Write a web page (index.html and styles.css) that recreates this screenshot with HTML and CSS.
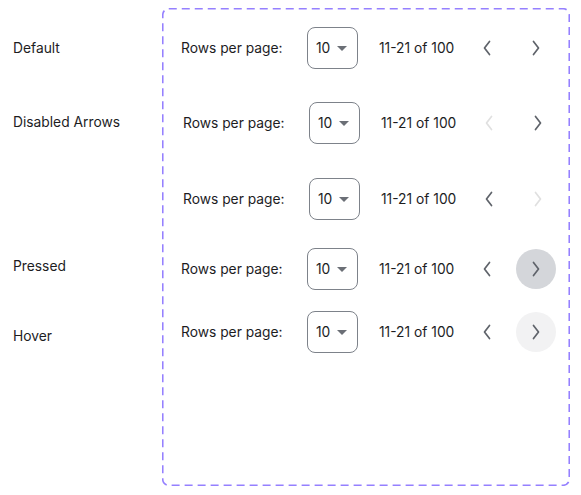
FILE: index.html
```html
<!DOCTYPE html>
<html>
<head>
<meta charset="utf-8">
<link rel="stylesheet" href="styles.css">
</head>
<body>
<div class="page">
  <div class="labels">
    <div class="label l1">Default</div>
    <div class="label l2">Disabled Arrows</div>
    <div class="label l3">Pressed</div>
    <div class="label l4">Hover</div>
  </div>
  <div class="frame">
    <svg class="dash" width="408" height="478" viewBox="0 0 408 478"><rect x="0.75" y="0.75" width="406.5" height="476.5" rx="6" ry="6" fill="none" stroke="#9580ff" stroke-width="1.6" stroke-dasharray="8 5"/></svg>
    <div class="row r1">
      <span class="rpp">Rows per page:</span>
      <div class="select"><span>10</span><span class="caret"></span></div>
      <span class="range">11-21 of 100</span>
      <button class="nav"><svg width="10" height="16" viewBox="0 0 10 16"><path d="M7.5 1.5 L2.5 8 L7.5 14.5" fill="none" stroke="currentColor" stroke-width="1.7" stroke-linecap="round" stroke-linejoin="round"/></svg></button>
      <button class="nav"><svg width="10" height="16" viewBox="0 0 10 16"><path d="M2.5 1.5 L7.5 8 L2.5 14.5" fill="none" stroke="currentColor" stroke-width="1.7" stroke-linecap="round" stroke-linejoin="round"/></svg></button>
    </div>
    <div class="row r2 shift">
      <span class="rpp">Rows per page:</span>
      <div class="select"><span>10</span><span class="caret"></span></div>
      <span class="range">11-21 of 100</span>
      <button class="nav disabled"><svg width="10" height="16" viewBox="0 0 10 16"><path d="M7.5 1.5 L2.5 8 L7.5 14.5" fill="none" stroke="currentColor" stroke-width="1.7" stroke-linecap="round" stroke-linejoin="round"/></svg></button>
      <button class="nav"><svg width="10" height="16" viewBox="0 0 10 16"><path d="M2.5 1.5 L7.5 8 L2.5 14.5" fill="none" stroke="currentColor" stroke-width="1.7" stroke-linecap="round" stroke-linejoin="round"/></svg></button>
    </div>
    <div class="row r3 shift">
      <span class="rpp">Rows per page:</span>
      <div class="select"><span>10</span><span class="caret"></span></div>
      <span class="range">11-21 of 100</span>
      <button class="nav"><svg width="10" height="16" viewBox="0 0 10 16"><path d="M7.5 1.5 L2.5 8 L7.5 14.5" fill="none" stroke="currentColor" stroke-width="1.7" stroke-linecap="round" stroke-linejoin="round"/></svg></button>
      <button class="nav disabled"><svg width="10" height="16" viewBox="0 0 10 16"><path d="M2.5 1.5 L7.5 8 L2.5 14.5" fill="none" stroke="currentColor" stroke-width="1.7" stroke-linecap="round" stroke-linejoin="round"/></svg></button>
    </div>
    <div class="row r4">
      <span class="rpp">Rows per page:</span>
      <div class="select"><span>10</span><span class="caret"></span></div>
      <span class="range">11-21 of 100</span>
      <button class="nav"><svg width="10" height="16" viewBox="0 0 10 16"><path d="M7.5 1.5 L2.5 8 L7.5 14.5" fill="none" stroke="currentColor" stroke-width="1.7" stroke-linecap="round" stroke-linejoin="round"/></svg></button>
      <button class="nav pressed"><svg width="10" height="16" viewBox="0 0 10 16"><path d="M2.5 1.5 L7.5 8 L2.5 14.5" fill="none" stroke="currentColor" stroke-width="1.7" stroke-linecap="round" stroke-linejoin="round"/></svg></button>
    </div>
    <div class="row r5">
      <span class="rpp">Rows per page:</span>
      <div class="select"><span>10</span><span class="caret"></span></div>
      <span class="range">11-21 of 100</span>
      <button class="nav"><svg width="10" height="16" viewBox="0 0 10 16"><path d="M7.5 1.5 L2.5 8 L7.5 14.5" fill="none" stroke="currentColor" stroke-width="1.7" stroke-linecap="round" stroke-linejoin="round"/></svg></button>
      <button class="nav hover"><svg width="10" height="16" viewBox="0 0 10 16"><path d="M2.5 1.5 L7.5 8 L2.5 14.5" fill="none" stroke="currentColor" stroke-width="1.7" stroke-linecap="round" stroke-linejoin="round"/></svg></button>
    </div>
  </div>
</div>
</body>
</html>
```

FILE: styles.css
```css
* { box-sizing: border-box; }
html, body { margin: 0; padding: 0; background: #fff; }
body {
  font-family: "Inter", "Lato", sans-serif;
  font-size: 13.8px;
  color: #1d1d1f;
}
.page {
  display: flex;
  padding-top: 8px;
}
.labels {
  width: 162px;
  padding-left: 13px;
  display: flex;
  flex-direction: column;
}
.label { line-height: 20px; height: 20px; white-space: nowrap; }
.l1 { margin-top: 30px; }
.l2 { margin-top: 54px; }
.l3 { margin-top: 124px; }
.l4 { margin-top: 50px; }
.frame {
  position: relative;
  width: 408px;
  height: 478px;
  padding-left: 19px;
  display: flex;
  flex-direction: column;
}
.dash {
  position: absolute;
  left: 0;
  top: 0;
  pointer-events: none;
}
.row {
  display: flex;
  align-items: center;
  height: 42px;
  white-space: nowrap;
}
.row > * { flex-shrink: 0; }
.r1 { margin-top: 19px; }
.r2 { margin-top: 33px; }
.r3 { margin-top: 34px; }
.r4 { margin-top: 28px; }
.r5 { margin-top: 21px; }
.shift { padding-left: 2px; }
.rpp { width: 126px; }
.select {
  width: 51px;
  height: 42px;
  border: 1px solid #7d828a;
  border-radius: 8px;
  display: flex;
  align-items: center;
  padding-left: 8px;
  gap: 7px;
  color: #1d1d1f;
}
.caret {
  width: 0; height: 0;
  border-left: 5px solid transparent;
  border-right: 5px solid transparent;
  border-top: 5px solid #6b6f76;
  margin-top: 1px;
}
.range { margin-left: 21px; width: 72px; }
.nav {
  width: 40px;
  height: 40px;
  border: 0;
  border-radius: 50%;
  background: transparent;
  color: #5f636a;
  display: flex;
  align-items: center;
  justify-content: center;
  padding: 0;
  margin-left: 16px;
}
.nav + .nav { margin-left: 9px; }
.nav.disabled { color: #e0e0e0; }
.nav.pressed { background: #d4d6da; }
.nav.hover { background: #f2f2f3; }
```
